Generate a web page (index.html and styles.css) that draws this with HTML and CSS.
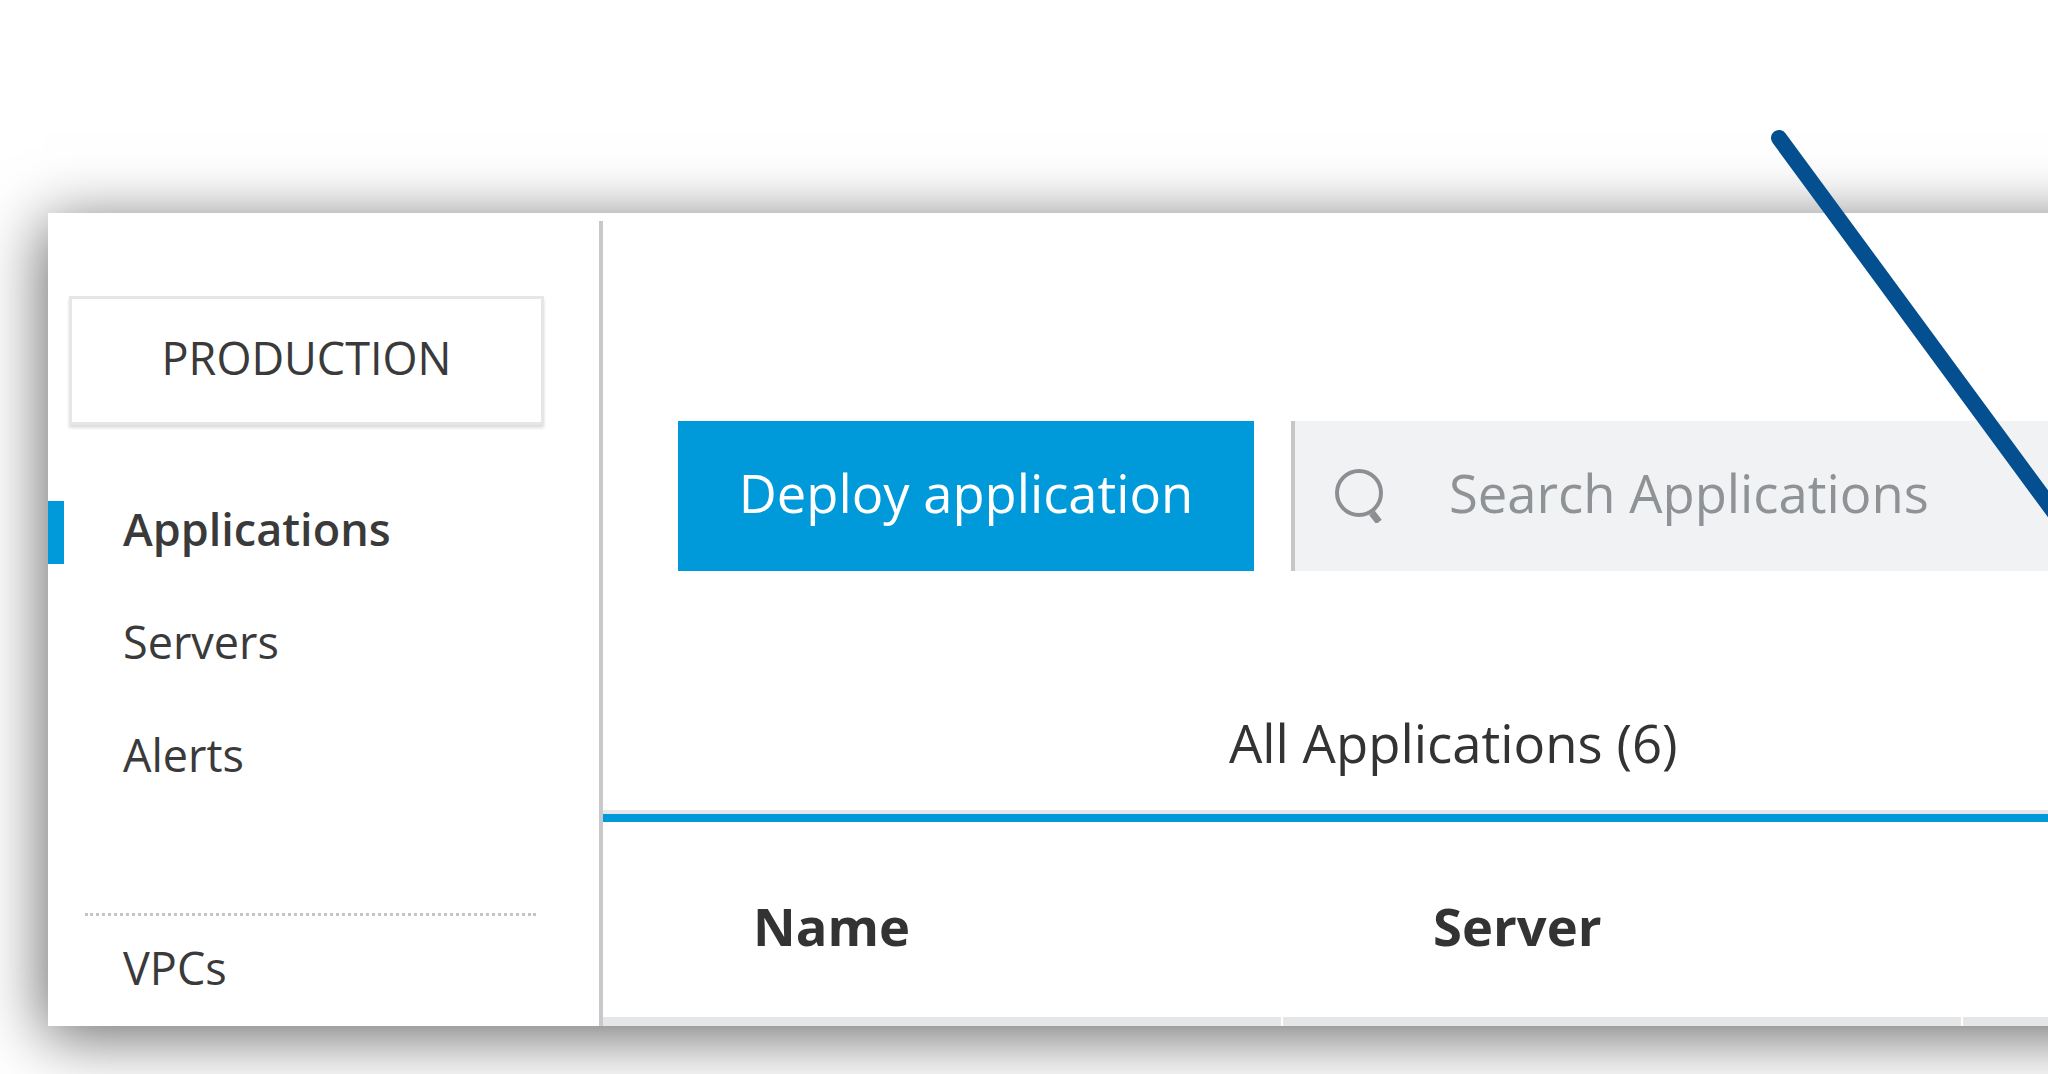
FILE: index.html
```html
<!DOCTYPE html>
<html lang="en">
<head>
  <meta charset="UTF-8" />
  <title>Applications</title>
  <link rel="stylesheet" href="styles.css">
</head>
<body>
  <div class="window">
    <aside class="sidebar">
      <div class="env-box">PRODUCTION</div>
      <nav>
        <ul class="nav-list">
          <li class="active"><a href="#">Applications</a></li>
          <li><a href="#">Servers</a></li>
          <li><a href="#">Alerts</a></li>
        </ul>
        <div class="nav-divider"></div>
        <ul class="nav-list">
          <li><a href="#">VPCs</a></li>
        </ul>
      </nav>
    </aside>

    <main class="content">
      <div class="toolbar">
        <button class="deploy-btn">Deploy application</button>
        <div class="search">
          <svg class="search-icon" viewBox="0 0 50 54" width="50" height="54">
            <circle cx="24" cy="24" r="22" fill="none" stroke="#8c8f92" stroke-width="4"/>
            <path d="M37 44 L44 53" fill="none" stroke="#8c8f92" stroke-width="7"/>
          </svg>
          <span class="search-text">Search Applications</span>
        </div>
      </div>

      <div class="tabs">
        <span class="tab">All Applications (6)</span>
      </div>

      <div class="table-head">
        <div class="col">Name</div>
        <div class="col">Server</div>
        <div class="col"></div>
      </div>
      <div class="table-rows">
        <div class="cell"></div>
        <div class="cell"></div>
        <div class="cell"></div>
      </div>
    </main>
  </div>

  <svg class="pointer" width="2048" height="1074" viewBox="0 0 2048 1074">
    <path d="M1779 138 L2060 520" stroke="#034f8f" stroke-width="16" stroke-linecap="round" fill="none"/>
  </svg>
</body>
</html>
```

FILE: styles.css
```css
* {
  margin: 0;
  padding: 0;
  box-sizing: border-box;
}

html, body {
  height: 1074px;
  overflow: hidden;
}

body {
  font-family: 'Open Sans', sans-serif;
  background-color: #fff;
  color: #333;
  padding: 213px 0 0 48px;
}

/* runs past the right edge, so the shadow does not fade out at the corner */
.window {
  display: flex;
  width: 2100px;
  height: 813px;
  background-color: #fff;
  box-shadow: -4px 10px 60px rgba(0,0,0,0.6);
}

/* left column */
.sidebar {
  width: 555px;
  margin-top: 8px;
  border-right: 4px solid #c8c9ca;
  padding-top: 75px;
  flex-shrink: 0;
}

.env-box {
  width: 475px;
  height: 129px;
  margin-left: 21px;
  border: 3px solid #e6e6e6;
  box-shadow: 0 3px 3px #ddd;
  text-align: center;
  font-size: 45px;
  line-height: 118px;
  color: #3a3a3a;
}

.nav-list {
  list-style: none;
}

.env-box + nav {
  margin-top: 47px;
}

.nav-list li {
  height: 113px;
  padding-left: 75px;
  font-size: 45px;
  line-height: 113px;
  position: relative;
}

.nav-list a {
  color: #3a3a3a;
  text-decoration: none;
}

.nav-list li.active a {
  font-weight: 600;
}

.nav-list li.active::before {
  content: "";
  position: absolute;
  left: 0;
  top: 29px;
  width: 16px;
  height: 63px;
  background-color: #0099da;
}

.nav-divider {
  width: 451px;
  margin: 102px 0 -5px 37px;
  border-top: 3px dotted #c4c4c4;
}

/* right column */
.content {
  flex: 1;
  display: flex;
  flex-direction: column;
}

.toolbar {
  display: flex;
  height: 150px;
  margin: 208px 0 0 75px;
}

.deploy-btn {
  width: 576px;
  padding-bottom: 8px;
  background-color: #0099da;
  color: #fff;
  border: none;
  font-family: inherit;
  font-size: 52.5px;
}

.search {
  flex: 1;
  display: flex;
  align-items: center;
  margin-left: 37px;
  border-left: 4px solid #c4c6c8;
  background-color: #f1f2f4;
}

.search-icon {
  margin-left: 40px;
}

.search-text {
  margin: 0 0 8px 64px;
  font-size: 52.6px;
  color: #8f9396;
}

.tabs {
  height: 251px;
  padding: 136px 0 0 626px;
  border-bottom: 8px solid #0099da;
  font-size: 52.7px;
  line-height: 72px;
  box-shadow: inset 0 -4px 0 #e4e6e8;
}

.table-head {
  display: flex;
  height: 195px;
}

.table-head .col {
  width: 680px;
  padding-left: 150px;
  font-size: 52.5px;
  font-weight: 700;
  line-height: 208px;
}

.table-rows {
  display: flex;
  flex: 1;
  gap: 2px;
}

.cell {
  width: 678px;
  background-color: #e4e6e8;
}

.pointer {
  position: absolute;
  left: 0;
  top: 0;
}
```
